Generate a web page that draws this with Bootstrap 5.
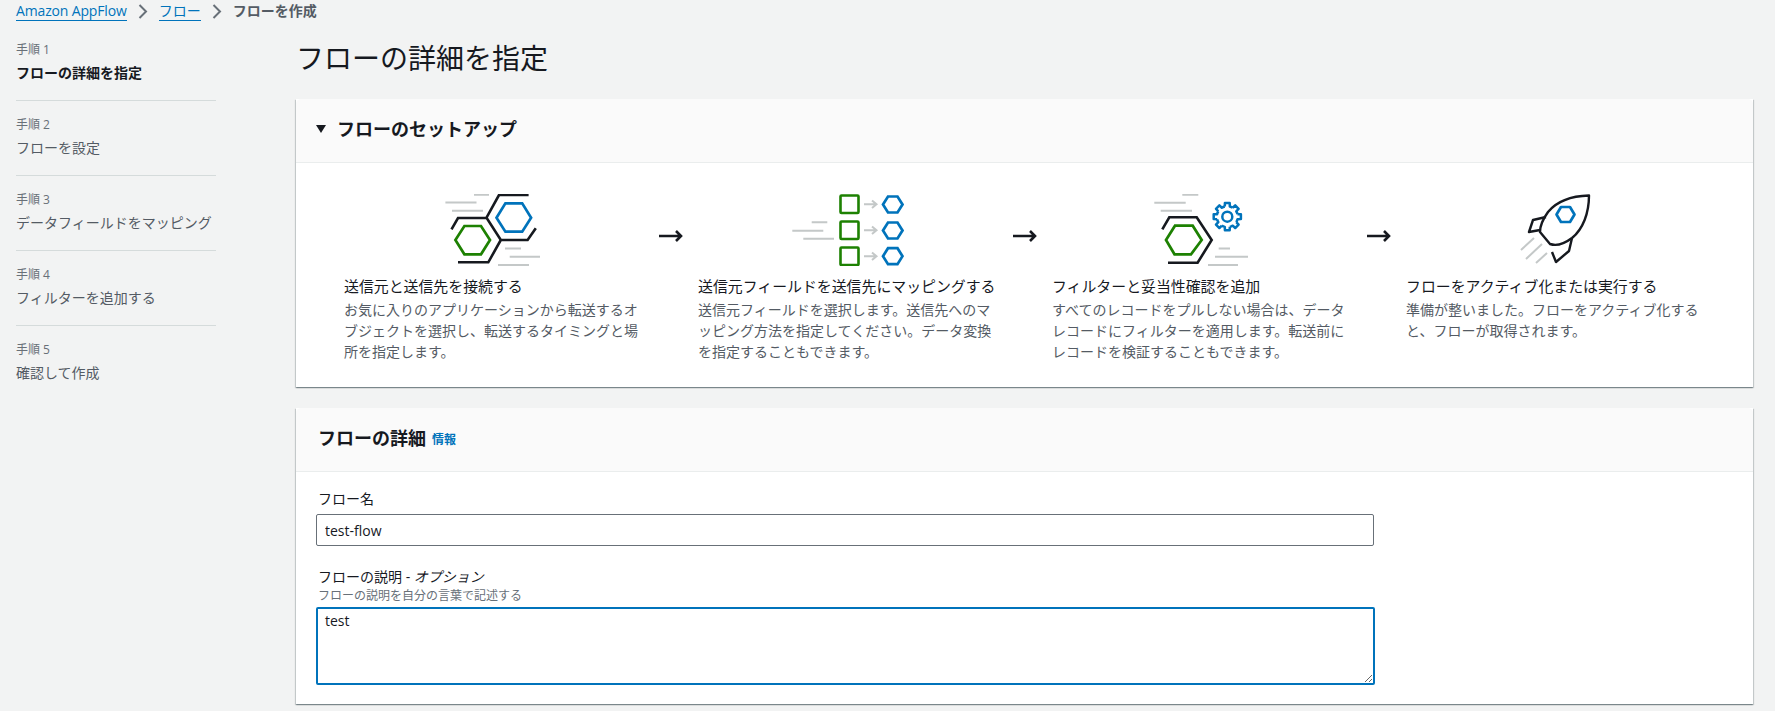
<!DOCTYPE html>
<html lang="ja">
<head>
<meta charset="utf-8">
<title>フローを作成</title>
<link href="https://cdn.jsdelivr.net/npm/bootstrap@5.3.0/dist/css/bootstrap.min.css" rel="stylesheet">
<style>
html,body{height:711px;overflow:hidden}
body{background:#f2f3f3;color:#16191f;font-family:"Open Sans","Noto Sans CJK JP",sans-serif;font-size:14px;line-height:21px}
.crumbs{height:25px;padding-left:16px;padding-top:1px}
.crumb-link{color:#0073bb;text-decoration:none;border-bottom:1px solid #0073bb;line-height:19px;height:20px;display:block}
.crumb-latin{letter-spacing:-.15px}
.crumb-cur{color:#545b64;font-weight:700;line-height:19px}
.crumb-sep{width:32px;height:20px;display:flex;align-items:center;justify-content:center}
.side{width:200px;margin-left:16px;margin-top:1px;flex:none}
.side-item{height:75px;padding-top:15px;border-bottom:1px solid #d5dbdb;color:#545b64}
.side-item:last-child{border-bottom:0}
.side-num{font-size:12px;line-height:18px;color:#687078}
.side-name{line-height:22px;margin-top:3px}
.side-on{color:#16191f;font-weight:700}
.main-col{margin-left:80px;width:1457px;flex:none}
.page-ttl{font-size:28px;line-height:36px;font-weight:400;margin:15px 0 23px 0}
.panel{border:0;border-radius:0;background:#fff;box-shadow:0 1px 1px 0 rgba(0,28,36,.3),1px 1px 1px 0 rgba(0,28,36,.15),-1px 1px 1px 0 rgba(0,28,36,.15)}
.panel-first{height:288px;margin-bottom:21px}
.panel-second{height:296px}
.panel-head{background:#fafafa;border-bottom:1px solid #eaeded;border-radius:0;padding:0 20px;display:flex;align-items:center;flex:none}
.panel-first .panel-head{height:64px;padding-bottom:4px}
.panel-second .panel-head{height:64px;padding-left:22px;padding-bottom:3px}
.panel-ttl{font-size:18px;line-height:24px;font-weight:700;margin:0}
.caret-ic{width:10px;height:8px;margin-right:11px;flex:none;display:block}
.info-lnk{font-size:12px;font-weight:700;color:#0073bb;text-decoration:none;margin-left:6px;line-height:18px;padding-top:3px}
.flow-body{padding:31px 0 0 48px;display:flex}
.step-box{width:298px;flex:none}
.step-art{display:block;height:72px;margin:0 auto}
.step-ttl{font-size:14.9px;line-height:20px;margin-top:10px;white-space:nowrap}
.step-txt{color:#545b64;line-height:20.8px;margin-top:4px}
.arrow-box{width:56px;flex:none;display:flex;justify-content:center;padding:35px 0 0 2px;align-items:flex-start}
.form-area{padding:17px 0 0 20px;width:1078px}
.fld-label{line-height:20px;padding-left:2px;margin:0;display:block}
.fld-opt{font-style:oblique;font-weight:400}
.fld-hint{font-size:12px;line-height:17px;color:#687078;padding-left:2px}
.fld-input{height:32px;border:1px solid #687078;border-radius:2px;padding:4px 8px;font-size:14px;color:#16191f;margin-top:5px;line-height:20px}
.fld-area{width:1059px;height:78px;border:2px solid #0073bb;border-radius:2px;padding:2px 7px;font-size:14px;color:#16191f;margin-top:3px;line-height:20px;box-shadow:none;display:block}
.fld-gap{margin-top:21px}
</style>
</head>
<body>
<nav class="crumbs d-flex align-items-start" aria-label="breadcrumb">
  <a class="crumb-link crumb-latin" href="#">Amazon AppFlow</a>
  <span class="crumb-sep"><svg width="10" height="15" viewBox="0 0 10 15"><path d="M1.5 1 L8 7.5 L1.5 14" fill="none" stroke="#687078" stroke-width="2"/></svg></span>
  <a class="crumb-link" href="#">フロー</a>
  <span class="crumb-sep"><svg width="10" height="15" viewBox="0 0 10 15"><path d="M1.5 1 L8 7.5 L1.5 14" fill="none" stroke="#687078" stroke-width="2"/></svg></span>
  <span class="crumb-cur">フローを作成</span>
</nav>
<div class="d-flex">
  <aside class="side">
    <div class="side-item"><div class="side-num">手順 1</div><div class="side-name side-on">フローの詳細を指定</div></div>
    <div class="side-item"><div class="side-num">手順 2</div><div class="side-name">フローを設定</div></div>
    <div class="side-item"><div class="side-num">手順 3</div><div class="side-name">データフィールドをマッピング</div></div>
    <div class="side-item"><div class="side-num">手順 4</div><div class="side-name">フィルターを追加する</div></div>
    <div class="side-item"><div class="side-num">手順 5</div><div class="side-name">確認して作成</div></div>
  </aside>
  <main class="main-col">
    <h1 class="page-ttl">フローの詳細を指定</h1>
    <section class="card panel panel-first">
      <div class="card-header panel-head">
        <svg class="caret-ic" viewBox="0 0 10 8"><path d="M0 0H10L5 8Z" fill="#16191f"/></svg>
        <h2 class="panel-ttl">フローのセットアップ</h2>
      </div>
      <div class="flow-body">
        <div class="step-box">
          <svg class="step-art" width="98" height="72" viewBox="445 194 98 72" fill="none" stroke-width="2">
            <g stroke="#c4c8c8"><path d="M475 194.8H490M446.4 202.6H477.5M453 210.8H484M506 248.4H522M510.7 256.7H541M499 265H530"/></g>
            <path d="M529.6 195H500L487.5 217.7L501.8 240H528.6L536.8 228.3M452.5 229.3L459 218H487.5M501.8 240L489.3 262.3H459" stroke="#16191f" stroke-width="2.6"/>
            <path d="M497.5 217.7L506.4 203.3H523.2L532.1 217.7L523.2 231.7H506.4Z" stroke="#0073bb" stroke-width="2.7"/>
            <path d="M456.4 240L465.4 226H482L491 240L482 254.3H465.4Z" stroke="#1d8102" stroke-width="2.7"/>
          </svg>
          <div class="step-ttl">送信元と送信先を接続する</div>
          <div class="step-txt">お気に入りのアプリケーションから転送するオブジェクトを選択し、転送するタイミングと場所を指定します。</div>
        </div>
        <div class="arrow-box"><svg width="24" height="14" viewBox="0 0 24 14"><path d="M0 7H22M17 2L22 7L17 12" fill="none" stroke="#16191f" stroke-width="2.6"/></svg></div>
        <div class="step-box">
          <svg class="step-art" width="113" height="72" viewBox="791 194 113 72" fill="none" stroke-width="2">
            <path d="M811.7 222.3H827.3M792.3 230.7H823.3M803.3 238.7H834M864 204.3H876M872 200.5L876.5 204.3L872 208M864 230.3H876M872 226.5L876.5 230.3L872 234M864 256.3H876M872 252.5L876.5 256.3L872 260" stroke="#c4c8c8"/>
            <g stroke="#1d8102" stroke-width="2.6"><rect x="840.5" y="195.5" width="18" height="17.5" rx="1"/><rect x="840.5" y="221.5" width="18" height="17.5" rx="1"/><rect x="840.5" y="247.5" width="18" height="17.5" rx="1"/></g>
            <g stroke="#0073bb" stroke-width="2.7"><path d="M883 204.5L888 196.5H897.5L902.5 204.5L897.5 212.5H888Z"/><path d="M883 230.5L888 222.5H897.5L902.5 230.5L897.5 238.5H888Z"/><path d="M883 256.2L888 248.2H897.5L902.5 256.2L897.5 264.2H888Z"/></g>
          </svg>
          <div class="step-ttl">送信元フィールドを送信先にマッピングする</div>
          <div class="step-txt">送信元フィールドを選択します。送信先へのマッピング方法を指定してください。データ変換を指定することもできます。</div>
        </div>
        <div class="arrow-box"><svg width="24" height="14" viewBox="0 0 24 14"><path d="M0 7H22M17 2L22 7L17 12" fill="none" stroke="#16191f" stroke-width="2.6"/></svg></div>
        <div class="step-box">
          <svg class="step-art" width="96" height="72" viewBox="1153 194 96 72" fill="none" stroke-width="2">
            <path d="M1182.3 194.8H1198.3M1154.3 202.7H1185.7M1160.7 210.8H1192M1218.7 248.4H1230M1215 256.7H1248M1208 265H1238" stroke="#c4c8c8"/>
            <path d="M1162.3 229.3L1169.3 217.3H1196.7L1211.7 240L1197.6 262.7H1168" stroke="#16191f" stroke-width="2.6"/>
            <path d="M1166 240L1175 225.7H1192.7L1201.7 240L1191 254.3H1174.5Z" stroke="#1d8102" stroke-width="2.7"/>
            <g transform="translate(1227.3 216.7)" stroke="#0073bb" stroke-linejoin="round" stroke-width="2.5">
              <circle r="5"/>
              <g id="geartooth"><path d="M-2.5 -10.2L-2.4 -13.6H2.4L2.5 -10.2A10.5 10.5 0 0 1 5.45 -8.98"/></g>
              <use href="#geartooth" transform="rotate(45)"/><use href="#geartooth" transform="rotate(90)"/><use href="#geartooth" transform="rotate(135)"/><use href="#geartooth" transform="rotate(180)"/><use href="#geartooth" transform="rotate(225)"/><use href="#geartooth" transform="rotate(270)"/><use href="#geartooth" transform="rotate(315)"/>
            </g>
          </svg>
          <div class="step-ttl">フィルターと妥当性確認を追加</div>
          <div class="step-txt">すべてのレコードをプルしない場合は、データレコードにフィルターを適用します。転送前にレコードを検証することもできます。</div>
        </div>
        <div class="arrow-box"><svg width="24" height="14" viewBox="0 0 24 14"><path d="M0 7H22M17 2L22 7L17 12" fill="none" stroke="#16191f" stroke-width="2.6"/></svg></div>
        <div class="step-box">
          <svg class="step-art" width="72" height="72" viewBox="1520 194 72 72" fill="none" stroke-width="2.4" stroke-linejoin="round">
            <path d="M1522 250L1535 238M1527 259L1543 244M1537 263L1548 253" stroke="#c4c8c8" stroke-width="2"/>
            <path d="M1590 195.5C1572 196 1558 201 1549 212C1544 219 1541 226 1541 232L1551 244C1557 246 1565 244 1573 238C1584 229 1590 213 1590 195.5Z" stroke="#16191f"/>
            <path d="M1547 217L1534 220L1530 232L1541 230M1573 238L1570 251L1557 262L1553 252" stroke="#16191f"/>
            <path d="M1557.5 214.5L1562 207H1571L1575.5 214.5L1571 222H1562Z" stroke="#0073bb" stroke-width="2.7"/>
          </svg>
          <div class="step-ttl">フローをアクティブ化または実行する</div>
          <div class="step-txt">準備が整いました。フローをアクティブ化すると、フローが取得されます。</div>
        </div>
      </div>
    </section>
    <section class="card panel panel-second">
      <div class="card-header panel-head">
        <h2 class="panel-ttl">フローの詳細</h2><a class="info-lnk" href="#">情報</a>
      </div>
      <form class="form-area">
        <label class="fld-label" for="flowName">フロー名</label>
        <input id="flowName" class="form-control fld-input" type="text" value="test-flow">
        <div class="fld-gap">
          <label class="fld-label" for="flowDesc">フローの説明 - <i class="fld-opt">オプション</i></label>
          <div class="fld-hint">フローの説明を自分の言葉で記述する</div>
          <textarea id="flowDesc" class="form-control fld-area">test</textarea>
        </div>
      </form>
    </section>
  </main>
</div>
<script src="https://cdn.jsdelivr.net/npm/bootstrap@5.3.0/dist/js/bootstrap.bundle.min.js"></script>
</body>
</html>
